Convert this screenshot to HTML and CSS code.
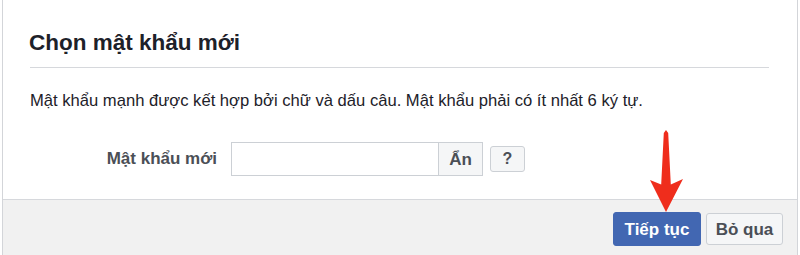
FILE: index.html
```html
<!DOCTYPE html>
<html lang="vi">
<head>
<meta charset="utf-8">
<title>Chọn mật khẩu mới</title>
<link rel="stylesheet" href="styles.css">
</head>
<body>
<div class="dialog">
  <div class="dialog-header">
    <h2 class="dialog-title">Chọn mật khẩu mới</h2>
  </div>
  <div class="dialog-body">
    <p class="hint">Mật khẩu mạnh được kết hợp bởi chữ và dấu câu. Mật khẩu phải có ít nhất 6 ký tự.</p>
    <div class="form-row">
      <label class="field-label" for="pw">Mật khẩu mới</label>
      <div class="input-group">
        <input class="text-input" id="pw" type="password">
        <button class="btn btn-attached" type="button">Ẩn</button>
      </div>
      <button class="btn btn-small" type="button">?</button>
    </div>
  </div>
  <div class="dialog-footer">
    <button class="btn btn-primary" type="button">Tiếp tục</button>
    <button class="btn btn-secondary" type="button">Bỏ qua</button>
  </div>
</div>
<svg class="annotation-arrow" width="60" height="95" viewBox="0 0 60 95" aria-hidden="true">
  <path d="M26 87 L10 55 L21.2 59.5 L23.8 8 L26 5 L28.2 8 L30.8 59.5 L43 54 Z" fill="#ef2d1c"/>
</svg>
</body>
</html>
```

FILE: styles.css
```css
html, body {
  margin: 0;
  padding: 0;
  background: #ffffff;
}

body {
  width: 800px;
  height: 255px;
  overflow: hidden;
  position: relative;
  font-family: "Liberation Sans", Arial, Helvetica, sans-serif;
  color: #1d2129;
}

.dialog {
  margin: 0 2px;
  height: 255px;
  border-left: 1px solid #d3d5d9;
  border-right: 1px solid #d3d5d9;
  display: flex;
  flex-direction: column;
  background: #ffffff;
}

.dialog-header {
  margin: 0 28px 0 27px;
  padding: 29px 0 11px;
  border-bottom: 1px solid #d6d8dc;
}

.dialog-title {
  margin: 0 0 0 -1px;
  font-size: 22.5px;
  line-height: 27px;
  font-weight: bold;
  color: #1d2129;
}

.dialog-body {
  padding: 23px 28px 23px 27px;
}

.hint {
  margin: 0;
  font-size: 16.6px;
  line-height: 20px;
  color: #1d2129;
}

.form-row {
  margin-top: 31px;
  display: flex;
  align-items: center;
}

.field-label {
  width: 187px;
  margin-right: 14px;
  text-align: right;
  font-size: 17px;
  font-weight: bold;
  color: #4b4f56;
}

.input-group {
  display: flex;
  height: 34px;
}

.text-input {
  box-sizing: border-box;
  width: 207px;
  height: 34px;
  margin: 0;
  padding: 0 8px;
  border: 1px solid #ccd0d5;
  border-right: none;
  outline: none;
  background: #ffffff;
  font-family: inherit;
  font-size: 16px;
}

.btn {
  box-sizing: border-box;
  margin: 0;
  padding: 0;
  font-family: "Liberation Sans", Arial, Helvetica, sans-serif;
  font-weight: bold;
  font-size: 17px;
  line-height: 1;
  cursor: pointer;
  border: 1px solid #ccd0d5;
  border-radius: 2px;
  background: #f5f6f7;
  color: #4b4f56;
}

.btn-attached {
  width: 45px;
  height: 34px;
  border-radius: 0;
}

.btn-small {
  width: 35px;
  height: 26px;
  margin-left: 7px;
  font-size: 16px;
  border-radius: 3px;
}

.dialog-footer {
  flex: 1;
  border-top: 1px solid #d6d8dc;
  background: #f1f1f1;
  padding: 12px 14px 0;
  display: flex;
  justify-content: flex-end;
  align-items: flex-start;
  gap: 5px;
}

.btn-primary {
  width: 88px;
  height: 34px;
  background: #4267b2;
  border-color: #4267b2;
  color: #ffffff;
  border-radius: 3px;
}

.btn-secondary {
  width: 77px;
  height: 32px;
  margin-top: 1px;
  border-radius: 3px;
}

.annotation-arrow {
  position: absolute;
  left: 640px;
  top: 125px;
}
```
